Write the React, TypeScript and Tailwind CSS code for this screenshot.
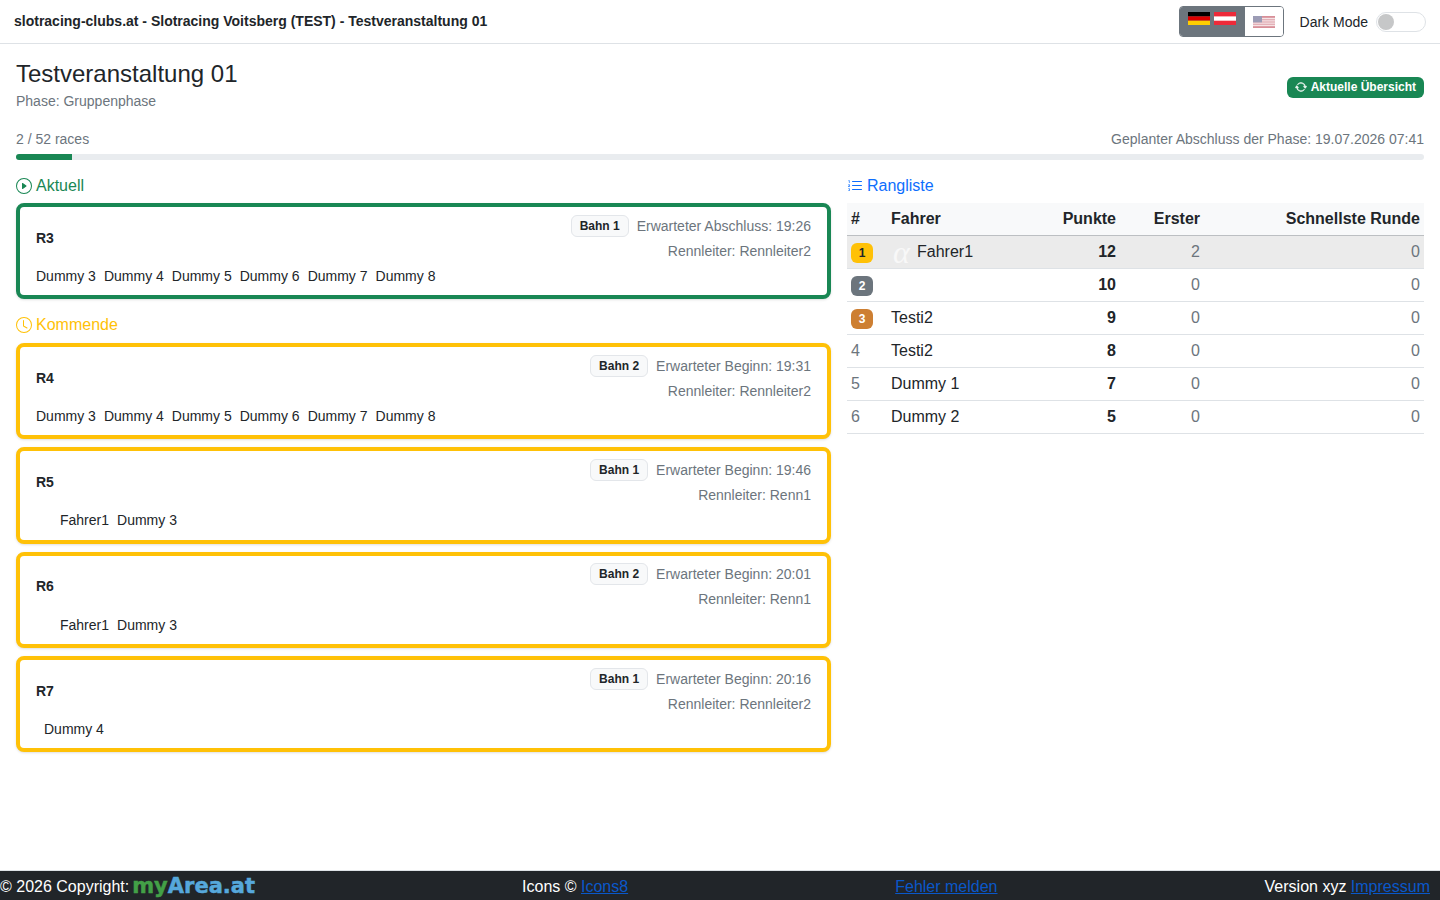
import React from "react";
import { BsArrowRepeat, BsClock, BsListOl, BsPlayCircle } from "react-icons/bs";

const upcoming = [
  { id: "R4", track: "Bahn 2", time: "19:31", lead: "Rennleiter2", drivers: ["Dummy 3", "Dummy 4", "Dummy 5", "Dummy 6", "Dummy 7", "Dummy 8"], indent: "" },
  { id: "R5", track: "Bahn 1", time: "19:46", lead: "Renn1", drivers: ["Fahrer1", "Dummy 3"], indent: "pl-6" },
  { id: "R6", track: "Bahn 2", time: "20:01", lead: "Renn1", drivers: ["Fahrer1", "Dummy 3"], indent: "pl-6" },
  { id: "R7", track: "Bahn 1", time: "20:16", lead: "Rennleiter2", drivers: ["Dummy 4"], indent: "pl-2" },
];

const ranking = [
  { pos: 1, name: "Fahrer1", points: 12, first: 2, badge: "bg-[#ffc107] text-[#212529]", active: true },
  { pos: 2, name: "", points: 10, first: 0, badge: "bg-[#6c757d] text-white" },
  { pos: 3, name: "Testi2", points: 9, first: 0, badge: "bg-[#cd7f32] text-white" },
  { pos: 4, name: "Testi2", points: 8, first: 0 },
  { pos: 5, name: "Dummy 1", points: 7, first: 0 },
  { pos: 6, name: "Dummy 2", points: 5, first: 0 },
];

function FlagDe() {
  return (
    <svg width="22" height="13" viewBox="0 0 22 13" className="block">
      <rect width="22" height="4.4" fill="#000" />
      <rect y="4.4" width="22" height="4.3" fill="#dd0000" />
      <rect y="8.7" width="22" height="4.3" fill="#ffce00" />
    </svg>
  );
}

function FlagAt() {
  return (
    <svg width="22" height="13" viewBox="0 0 22 13" className="block">
      <rect width="22" height="13" fill="#ed2939" />
      <rect y="4.4" width="22" height="4.3" fill="#fff" />
    </svg>
  );
}

function FlagUs() {
  return (
    <svg width="22" height="12" viewBox="0 0 22 12" className="block opacity-50">
      <rect width="22" height="12" fill="#b22234" />
      <rect y="1.85" width="22" height="0.9" fill="#fff" />
      <rect y="3.7" width="22" height="0.9" fill="#fff" />
      <rect y="5.55" width="22" height="0.9" fill="#fff" />
      <rect y="7.4" width="22" height="0.9" fill="#fff" />
      <rect y="9.25" width="22" height="0.9" fill="#fff" />
      <rect width="9" height="6.4" fill="#3c3b6e" />
    </svg>
  );
}

function RaceCard({ id, track, label, time, lead, drivers, indent, color }: any) {
  return (
    <div className={`h-[96.33px] rounded-lg border-4 bg-white px-4 pt-2 shadow-sm ${color}`}>
      <div className="flex items-center justify-between">
        <div className="pb-[4.4px] text-sm font-bold text-[#212529]">{id}</div>
        <div className="flex flex-col items-end text-sm text-[#6c757d]">
          <div className="flex h-[21.6px] items-center gap-2">
            <span className="rounded-md border border-[#e3e6ea] bg-[#f8f9fa] px-2 py-[3px] text-xs leading-[14px] font-bold text-[#212529]">{track}</span>
            <span>{label}: {time}</span>
          </div>
          <div className="flex h-[28.5px] items-center">Rennleiter: {lead}</div>
        </div>
      </div>
      <div className={`flex h-[22px] items-center gap-2 text-sm text-[#212529] ${indent}`}>
        {drivers.map((d: string) => (
          <span key={d}>{d}</span>
        ))}
      </div>
    </div>
  );
}

export default function App() {
  return (
    <div className="flex min-h-screen flex-col bg-white font-['Liberation_Sans',Arial,sans-serif] text-[#212529]">
      <header className="flex h-[44px] items-center justify-between border-b border-[#dee2e6] pr-[14px] pl-[14px]">
        <div className="pb-[2px] text-sm font-bold">slotracing-clubs.at - Slotracing Voitsberg (TEST) - Testveranstaltung 01</div>
        <div className="flex items-center">
          <div className="flex h-[31px] w-[105px] overflow-hidden rounded border border-[#6c757d]">
            <div className="flex w-[65px] items-start gap-1 bg-[#6c757d] pt-[5px] pl-2">
              <FlagDe />
              <FlagAt />
            </div>
            <div className="flex flex-1 items-center justify-center bg-white pt-[1px]">
              <FlagUs />
            </div>
          </div>
          <span className="ml-4 text-sm">Dark Mode</span>
          <div className="ml-2 flex h-[20px] w-[50px] items-center rounded-full border border-[#dee2e6] bg-white pl-[1px]">
            <div className="h-[16px] w-[16px] rounded-full bg-[#c6c7c8]" />
          </div>
        </div>
      </header>

      <main className="px-4 pt-[15px]">
        <div className="flex items-center justify-between">
          <div>
            <h1 className="text-2xl leading-[29px] font-normal">Testveranstaltung 01</h1>
            <div className="mt-[3px] text-sm leading-[21px] text-[#6c757d]">Phase: Gruppenphase</div>
          </div>
          <button className="mt-[3px] flex h-[21px] items-center gap-1 rounded-md bg-[#198754] px-2 text-xs font-bold text-white">
            <BsArrowRepeat className="text-xs" strokeWidth={0.6} />
            Aktuelle Übersicht
          </button>
        </div>

        <div className="mt-[17px] flex justify-between text-sm leading-[21px] text-[#6c757d]">
          <span>2 / 52 races</span>
          <span>Geplanter Abschluss der Phase: 19.07.2026 07:41</span>
        </div>
        <div className="mt-[4px] h-[6px] overflow-hidden rounded-full bg-[#e9ecef]">
          <div className="h-full w-[56px] bg-[#198754]" />
        </div>

        <div className="mt-[13px] flex gap-4">
          <section className="w-[815px]">
            <h2 className="mb-[6px] flex h-[24px] items-center gap-1 pt-[2px] text-base font-normal text-[#198754]">
              <BsPlayCircle className="text-base" />
              Aktuell
            </h2>
            <RaceCard
              id="R3"
              track="Bahn 1"
              label="Erwarteter Abschluss"
              time="19:26"
              lead="Rennleiter2"
              drivers={["Dummy 3", "Dummy 4", "Dummy 5", "Dummy 6", "Dummy 7", "Dummy 8"]}
              color="border-[#198754]"
            />
            <h2 className="mt-[12.67px] mb-[7px] flex h-[24px] items-center gap-1 pt-[2px] text-base font-normal text-[#ffc107]">
              <BsClock className="text-base" />
              Kommende
            </h2>
            <div className="flex flex-col gap-2">
              {upcoming.map((r) => (
                <RaceCard key={r.id} {...r} label="Erwarteter Beginn" color="border-[#ffc107]" />
              ))}
            </div>
          </section>

          <section className="flex-1">
            <h2 className="mb-[6px] flex h-[24px] items-center gap-1 pt-[2px] text-base font-normal text-[#0d6efd]">
              <BsListOl className="text-base" />
              Rangliste
            </h2>
            <table className="w-full table-fixed border-collapse text-base">
              <colgroup>
                <col className="w-[40px]" />
                <col />
                <col className="w-[70px]" />
                <col className="w-[84px]" />
                <col className="w-[220px]" />
              </colgroup>
              <thead>
                <tr className="h-[32px] border-b border-[#bcbfc2] bg-[#f8f9fa] font-bold">
                  <th className="px-1 text-left">#</th>
                  <th className="px-1 text-left">Fahrer</th>
                  <th className="px-1 text-right">Punkte</th>
                  <th className="px-1 text-right">Erster</th>
                  <th className="px-1 text-right">Schnellste Runde</th>
                </tr>
              </thead>
              <tbody>
                {ranking.map((r) => (
                  <tr key={r.pos} className={`h-[33px] border-b border-[#dee2e6] ${r.active ? "bg-[#ebebeb]" : ""}`}>
                    <td className="px-1 text-[#6c757d]">
                      {r.badge ? (
                        <span className={`mt-[2px] flex h-[20px] w-[22px] items-center justify-center rounded-md text-xs font-bold ${r.badge}`}>{r.pos}</span>
                      ) : (
                        r.pos
                      )}
                    </td>
                    <td className="px-1">
                      <div className="flex h-[24px] items-center">
                        {r.active && (
                          <span className="w-[26px] pl-[2px] font-['Liberation_Serif',serif] text-[32px] leading-[20px] text-[#f8f8f8] italic">α</span>
                        )}
                        {r.name}
                      </div>
                    </td>
                    <td className="px-1 text-right font-bold">{r.points}</td>
                    <td className="px-1 text-right text-[#6c757d]">{r.first}</td>
                    <td className="px-1 text-right text-[#6c757d]">0</td>
                  </tr>
                ))}
              </tbody>
            </table>
          </section>
        </div>
      </main>

      <footer className="mt-auto flex h-[30px] items-center justify-between border-t border-[#dee2e6] bg-[#212529] pt-[3px] pr-[10px] text-base text-white">
        <div className="flex items-center gap-[3px]">
          © 2026 Copyright:
          <span className="-mt-[2px] font-['DejaVu_Sans',sans-serif] text-[21px] leading-[20px] font-bold [-webkit-text-stroke:0.5px]">
            <span className="text-[#43a047]">my</span>
            <span className="text-[#56a8dc]">Area.at</span>
          </span>
        </div>
        <div>
          Icons © <span className="text-[#0a58ca] underline">Icons8</span>
        </div>
        <div className="text-[#0a58ca] underline">Fehler melden</div>
        <div>
          Version xyz <span className="text-[#0a58ca] underline">Impressum</span>
        </div>
      </footer>
    </div>
  );
}
